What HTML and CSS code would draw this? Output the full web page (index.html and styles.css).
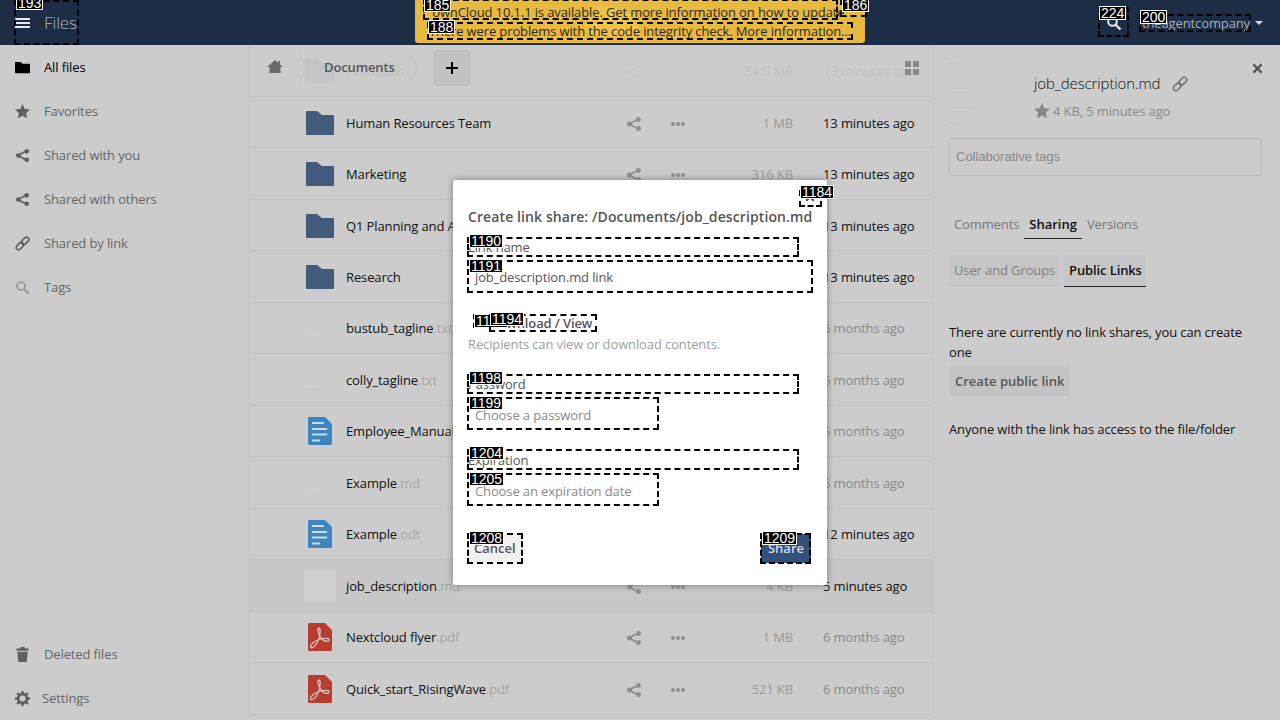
FILE: index.html
```html
<!DOCTYPE html>
<html lang="en">
<head>
  <meta charset="UTF-8">
  <title>Files</title>
  <link rel="stylesheet" href="styles.css">
</head>
<body>
  <svg class="defs" width="0" height="0">
    <symbol id="i-folder" viewBox="0 0 28 24"><path d="M0 1a1 1 0 0 1 1-1h10l5 4h11a1 1 0 0 1 1 1v18a1 1 0 0 1-1 1H1a1 1 0 0 1-1-1z"/></symbol>
    <symbol id="i-doc" viewBox="0 0 24 28">
      <path fill="#3b86c0" d="M0 1a1 1 0 0 1 1-1h16l7 7v20a1 1 0 0 1-1 1H1a1 1 0 0 1-1-1z"/>
      <path stroke="#cfdbe4" stroke-width="2" d="M4 6h12M4 12h15M4 17.500h15M4 23.500h8"/>
    </symbol>
    <symbol id="i-pdf" viewBox="0 0 24 28">
      <path fill="#b93c32" d="M0 1a1 1 0 0 1 1-1h16l7 7v20a1 1 0 0 1-1 1H1a1 1 0 0 1-1-1z"/>
      <path fill="none" stroke="#d8c4c0" stroke-width="1.300" d="M11 5c-2 0-1 6 2 10s8 4 8 2-5-2-10-.5S2 22 2.500 24s4 .5 7-5 3.500-14 1.500-14z"/>
    </symbol>
    <symbol id="i-share" viewBox="0 0 16 16"><path d="M12.500 1a2.500 2.500 0 1 0-.1 5 2.500 2.500 0 0 0 .1-5zM3.500 5.500a2.500 2.500 0 1 0 0 5 2.500 2.500 0 0 0 0-5zM12.500 10a2.500 2.500 0 1 0 0 5 2.500 2.500 0 0 0 0-5z"/><path d="M3 8l9.500-5M3 8l9.500 5" stroke="currentColor" stroke-width="1.800"/></symbol>
    <symbol id="i-dots" viewBox="0 0 14 4"><circle cx="2" cy="2" r="2"/><circle cx="7" cy="2" r="2"/><circle cx="12" cy="2" r="2"/></symbol>
    <symbol id="i-star" viewBox="0 0 16 16"><path d="M8 0l2.400 5.200 5.600.6-4.100 3.800 1.100 5.600L8 12.500l-5 2.700 1.100-5.600L0 5.800l5.600-.6z"/></symbol>
    <symbol id="i-link" viewBox="0 0 16 16"><g fill="none" stroke="currentColor" stroke-width="1.700" transform="rotate(-45 8 8)"><rect x="-0.500" y="5.500" width="9" height="5" rx="2.500"/><rect x="7.500" y="5.500" width="9" height="5" rx="2.500"/></g></symbol>
    <symbol id="i-search" viewBox="0 0 16 16"><circle cx="6.500" cy="6.500" r="4.300" fill="none" stroke="currentColor" stroke-width="2"/><path d="M9.800 9.800l4.700 4.700" stroke="currentColor" stroke-width="2.400"/></symbol>
    <symbol id="i-close" viewBox="0 0 12 12"><path d="M1.500 1.500l9 9M10.500 1.500l-9 9" stroke="currentColor" stroke-width="2.400"/></symbol>
  </svg>

  <header class="topbar">
    <div class="topbar-left">
      <span class="burger"><i></i><i></i><i></i></span>
      <span class="app-name">Files</span>
    </div>
    <div class="notify">
      <svg class="notify-logo" width="70" height="32" viewBox="0 0 70 32"><path d="M14 30a11 11 0 0 1-2-21 16 16 0 0 1 30-1 12 12 0 0 1 10 22z"/></svg>
      <div class="notify-line">ownCloud 10.1.1 is available. Get more information on how to update.</div>
      <div class="notify-line">There were problems with the code integrity check. More information…</div>
    </div>
    <div class="topbar-right">
      <svg class="top-search"><use href="#i-search"/></svg>
      <span class="user">theagentcompany</span>
      <span class="caret"></span>
    </div>
  </header>

  <div class="app">
    <nav class="sidebar">
      <a class="nav-item active">
        <svg class="nav-icon" viewBox="0 0 16 16"><path d="M0 3a1 1 0 0 1 1-1h5l2 2h7a1 1 0 0 1 1 1v8a1 1 0 0 1-1 1H1a1 1 0 0 1-1-1z"/></svg>
        All files
      </a>
      <a class="nav-item"><svg class="nav-icon"><use href="#i-star"/></svg>Favorites</a>
      <a class="nav-item"><svg class="nav-icon"><use href="#i-share"/></svg>Shared with you</a>
      <a class="nav-item"><svg class="nav-icon"><use href="#i-share"/></svg>Shared with others</a>
      <a class="nav-item"><svg class="nav-icon"><use href="#i-link"/></svg>Shared by link</a>
      <a class="nav-item nav-tags"><svg class="nav-icon"><use href="#i-search"/></svg>Tags</a>
      <div class="nav-spacer"></div>
      <a class="nav-item">
        <svg class="nav-icon" viewBox="0 0 16 16"><path d="M6 0h4l1 1.500h3.500V4h-13V1.500H5zM2.500 5h11l-.8 10a1 1 0 0 1-1 1H4.300a1 1 0 0 1-1-1z"/></svg>
        Deleted files
      </a>
      <a class="nav-item nav-settings">
        <svg class="nav-icon" viewBox="0 0 16 16"><circle cx="8" cy="8" r="4.700" fill="none" stroke="currentColor" stroke-width="3"/><path d="M8 0v3M8 13v3M0 8h3M13 8h3M2.300 2.300l2.200 2.200M11.500 11.500l2.200 2.200M13.700 2.300l-2.200 2.200M4.500 11.500l-2.200 2.200" stroke="currentColor" stroke-width="2.600"/></svg>
        Settings
      </a>
    </nav>

    <main class="files">
      <div class="controls">
        <svg class="home" viewBox="0 0 16 16"><path d="M8 1l3 2.700V2h2v3.500L16 8h-2.500v6h-11V8H0z"/></svg>
        <svg class="crumb-sep" viewBox="0 0 10 26"><path d="M1 0l8 13-8 13" fill="none" stroke="#bdbdbd"/></svg>
        <span class="crumb">Documents</span>
        <svg class="crumb-sep" viewBox="0 0 10 26"><path d="M1 0l8 13-8 13" fill="none" stroke="#bdbdbd"/></svg>
        <button class="add-btn"><svg width="14" height="14" viewBox="0 0 14 14"><path d="M7 1v12M1 7h12" stroke="#000" stroke-width="2"/></svg></button>
        <span class="grid-toggle"><i></i><i></i><i></i><i></i></span>
      </div>

      <div class="row under-bar">
        <span class="thumb"><svg class="ico-folder"><use href="#i-folder"/></svg></span>
        <span class="name">Financials</span>
        <svg class="act-share"><use href="#i-share"/></svg>
        <svg class="act-dots"><use href="#i-dots"/></svg>
        <span class="size">34.5 MB</span><span class="date recent">13 minutes ago</span>
      </div>
      <div class="row folder-row">
        <span class="thumb"><svg class="ico-folder"><use href="#i-folder"/></svg></span>
        <span class="name">Human Resources Team</span>
        <svg class="act-share"><use href="#i-share"/></svg>
        <svg class="act-dots"><use href="#i-dots"/></svg>
        <span class="size">1 MB</span><span class="date recent">13 minutes ago</span>
      </div>
      <div class="row">
        <span class="thumb"><svg class="ico-folder"><use href="#i-folder"/></svg></span>
        <span class="name">Marketing</span>
        <svg class="act-share"><use href="#i-share"/></svg>
        <svg class="act-dots"><use href="#i-dots"/></svg>
        <span class="size">316 KB</span><span class="date recent">13 minutes ago</span>
      </div>
      <div class="row folder-row">
        <span class="thumb"><svg class="ico-folder"><use href="#i-folder"/></svg></span>
        <span class="name">Q1 Planning and Allocation</span>
        <svg class="act-share"><use href="#i-share"/></svg>
        <svg class="act-dots"><use href="#i-dots"/></svg>
        <span class="size">160 KB</span><span class="date recent">13 minutes ago</span>
      </div>
      <div class="row">
        <span class="thumb"><svg class="ico-folder"><use href="#i-folder"/></svg></span>
        <span class="name">Research</span>
        <svg class="act-share"><use href="#i-share"/></svg>
        <svg class="act-dots"><use href="#i-dots"/></svg>
        <span class="size">1 MB</span><span class="date recent">13 minutes ago</span>
      </div>
      <div class="row">
        <span class="thumb"><span class="text-thumb"></span></span>
        <span class="name">bustub_tagline<em>.txt</em></span>
        <svg class="act-share"><use href="#i-share"/></svg>
        <svg class="act-dots"><use href="#i-dots"/></svg>
        <span class="size">1 KB</span><span class="date old">6 months ago</span>
      </div>
      <div class="row">
        <span class="thumb"><span class="text-thumb"></span></span>
        <span class="name">colly_tagline<em>.txt</em></span>
        <svg class="act-share"><use href="#i-share"/></svg>
        <svg class="act-dots"><use href="#i-dots"/></svg>
        <span class="size">1 KB</span><span class="date old">6 months ago</span>
      </div>
      <div class="row">
        <span class="thumb"><svg class="ico-doc"><use href="#i-doc"/></svg></span>
        <span class="name">Employee_Manual<em>.odt</em></span>
        <svg class="act-share"><use href="#i-share"/></svg>
        <svg class="act-dots"><use href="#i-dots"/></svg>
        <span class="size">9 KB</span><span class="date old">6 months ago</span>
      </div>
      <div class="row">
        <span class="thumb"><span class="text-thumb"></span></span>
        <span class="name">Example<em>.md</em></span>
        <svg class="act-share"><use href="#i-share"/></svg>
        <svg class="act-dots"><use href="#i-dots"/></svg>
        <span class="size">1 KB</span><span class="date old">6 months ago</span>
      </div>
      <div class="row">
        <span class="thumb"><svg class="ico-doc"><use href="#i-doc"/></svg></span>
        <span class="name">Example<em>.odt</em></span>
        <svg class="act-share"><use href="#i-share"/></svg>
        <svg class="act-dots"><use href="#i-dots"/></svg>
        <span class="size">37 KB</span><span class="date recent">12 minutes ago</span>
      </div>
      <div class="row selected">
        <span class="thumb"><span class="text-thumb filled"></span></span>
        <span class="name">job_description<em>.md</em></span>
        <svg class="act-share"><use href="#i-share"/></svg>
        <svg class="act-dots"><use href="#i-dots"/></svg>
        <span class="size">4 KB</span><span class="date recent">5 minutes ago</span>
      </div>
      <div class="row">
        <span class="thumb"><svg class="ico-doc"><use href="#i-pdf"/></svg></span>
        <span class="name">Nextcloud flyer<em>.pdf</em></span>
        <svg class="act-share"><use href="#i-share"/></svg>
        <svg class="act-dots"><use href="#i-dots"/></svg>
        <span class="size">1 MB</span><span class="date old">6 months ago</span>
      </div>
      <div class="row">
        <span class="thumb"><svg class="ico-doc"><use href="#i-pdf"/></svg></span>
        <span class="name">Quick_start_RisingWave<em>.pdf</em></span>
        <svg class="act-share"><use href="#i-share"/></svg>
        <svg class="act-dots"><use href="#i-dots"/></svg>
        <span class="size">521 KB</span><span class="date old">6 months ago</span>
      </div>
    </main>

    <aside class="details">
      <div class="file-head">
        <div class="preview"><i></i><i></i><i></i><i></i></div>
        <div class="file-info">
          <div class="file-title">job_description.md <svg class="title-link"><use href="#i-link"/></svg></div>
          <div class="file-meta"><svg class="meta-star"><use href="#i-star"/></svg>4 KB, 5 minutes ago</div>
        </div>
        <svg class="details-close"><use href="#i-close"/></svg>
      </div>
      <div class="tags-input">Collaborative tags</div>
      <div class="tabs">
        <span class="tab">Comments</span>
        <span class="tab tab-on">Sharing</span>
        <span class="tab">Versions</span>
      </div>
      <div class="subtabs">
        <span class="subtab">User and Groups</span>
        <span class="subtab subtab-on">Public Links</span>
      </div>
      <p class="share-note">There are currently no link shares, you can create one</p>
      <button class="create-link">Create public link</button>
      <p class="share-hint">Anyone with the link has access to the file/folder</p>
    </aside>
  </div>

  <div class="modal">
    <svg class="modal-close"><use href="#i-close"/></svg>
    <h3 class="modal-title">Create link share: /Documents/job_description.md</h3>
    <label class="field-label first">Link name</label>
    <div class="input input-wide input-filled">job_description.md link</div>
    <div class="perm"><b>Download / View</b></div>
    <div class="perm-hint">Recipients can view or download contents.</div>
    <label class="field-label">Password</label>
    <div class="input">Choose a password</div>
    <label class="field-label">Expiration</label>
    <div class="input">Choose an expiration date</div>
    <div class="modal-actions">
      <button class="btn-cancel">Cancel</button>
      <button class="btn-share">Share</button>
    </div>
  </div>

  <div class="marks">
    <div class="mark m193"><span>193</span></div>
    <div class="mark m185"><span>185</span></div>
    <div class="mark m186"><span>186</span></div>
    <div class="mark m188"><span>188</span></div>
    <div class="mark m224"><span>224</span></div>
    <div class="mark m200"><span>200</span></div>
    <div class="mark m1184"><span>1184</span></div>
    <div class="mark m1190"><span>1190</span></div>
    <div class="mark m1191"><span>1191</span></div>
    <div class="mark m1193"><span>1193</span></div>
    <div class="mark m1194"><span>1194</span></div>
    <div class="mark m1198"><span>1198</span></div>
    <div class="mark m1199"><span>1199</span></div>
    <div class="mark m1204"><span>1204</span></div>
    <div class="mark m1205"><span>1205</span></div>
    <div class="mark m1208"><span>1208</span></div>
    <div class="mark m1209"><span>1209</span></div>
  </div>
</body>
</html>
```

FILE: styles.css
```css
* {
  box-sizing: border-box;
}
html, body {
  margin: 0;
  height: 720px;
  overflow: hidden;
}
body {
  position: relative;
  width: 1280px;
  font-family: 'Open Sans', sans-serif;
  font-size: 13px;
  letter-spacing: -0.12px;
  color: #222;
  background: #ccc;
}
.defs {
  position: absolute;
}

/* top bar */
.topbar {
  height: 45px;
  background: #1c2d45;
  display: flex;
  justify-content: space-between;
  align-items: flex-start;
  color: #a6adb8;
}
.topbar-left {
  width: 415px;
  height: 45px;
  display: flex;
  align-items: center;
  padding-left: 15px;
}
.burger {
  width: 15px;
  display: flex;
  flex-direction: column;
  gap: 2px;
  margin-right: 14px;
}
.burger i {
  height: 2px;
  background: #e8eaee;
}
.app-name {
  font-size: 17px;
  font-weight: 300;
  color: #b0b6c0;
}
.notify {
  position: relative;
  width: 450px;
  height: 43px;
  background: #e8b93f;
  border-radius: 0 0 3px 3px;
  color: #2b2a20;
  text-align: center;
  line-height: 19px;
  padding-top: 3px;
  overflow: hidden;
}
.notify-logo {
  position: absolute;
  left: 165px;
  top: 6px;
  fill: #efc348;
}
.notify-line {
  position: relative;
}
.topbar-right {
  width: 415px;
  height: 45px;
  display: flex;
  align-items: center;
  justify-content: flex-end;
  padding-right: 17px;
}
.top-search {
  width: 16px;
  height: 16px;
  color: #e4e6ea;
  margin-right: 20px;
}
.user {
  color: #a6adb8;
  margin-right: 5px;
}
.caret {
  border: 4px solid transparent;
  border-top: 4px solid #d6d9de;
  border-bottom: 0;
}

/* layout */
.app {
  display: flex;
  height: 675px;
}
.sidebar {
  width: 250px;
  border-right: 1px solid #c2c2c2;
  display: flex;
  flex-direction: column;
  flex: none;
}
.nav-item {
  height: 44px;
  flex: none;
  display: flex;
  align-items: center;
  color: #666;
  padding-left: 15px;
}
.nav-item.active {
  color: #000;
}
.nav-icon {
  width: 15px;
  height: 15px;
  margin-right: 14px;
  fill: currentColor;
  color: #5f5f5f;
}
.active .nav-icon {
  color: #000;
}
.nav-tags .nav-icon {
  color: #999;
}
.nav-settings .nav-icon {
  width: 15px;
  margin-right: 12px;
}
.nav-spacer {
  flex: 1;
}

/* file list */
.files {
  position: relative;
  width: 684px;
  flex: none;
  border-right: 1px solid #c2c2c2;
}
.controls {
  position: absolute;
  left: 0;
  top: 0;
  width: 100%;
  height: 50px;
  background: rgba(204, 204, 204, 0.94);
  display: flex;
  align-items: flex-start;
  padding: 0 14px 0 17px;
}
.home {
  width: 16px;
  height: 16px;
  margin-top: 14px;
  fill: #6a6a6a;
}
.crumb-sep {
  width: 10px;
  height: 26px;
  margin: 10px 0 0 16px;
}
.crumb {
  font-weight: 600;
  color: #555;
  margin: 13px 0 0 15px;
  line-height: 18px;
}
.crumb + .crumb-sep {
  margin-left: 14px;
}
.add-btn {
  width: 38px;
  height: 36px;
  margin: 5px 0 0 14px;
  padding: 0;
  border: 0;
  border-radius: 3px;
  background: #c1c1c1;
  display: flex;
  align-items: center;
  justify-content: center;
}
.grid-toggle {
  margin: 16px 0 0 auto;
  display: grid;
  grid-template-columns: 6px 6px;
  grid-auto-rows: 6px;
  gap: 2px;
}
.grid-toggle i {
  background: #8a8a8a;
}
.row {
  height: 51.5px;
  padding-top: 1px;
  border-bottom: 1px solid #c3c3c3;
  display: flex;
  align-items: center;
}
.row.folder-row {
  padding-top: 2px;
}
.row.selected {
  background: #c7c7c7;
}
.thumb {
  width: 96px;
  flex: none;
  display: flex;
  padding-left: 56px;
}
.ico-folder {
  width: 28px;
  height: 24px;
  fill: #415b7d;
}
.ico-doc {
  width: 24px;
  height: 28px;
  margin-left: 2px;
}
.text-thumb {
  width: 32px;
  height: 32px;
  margin-left: -2px;
  background: linear-gradient(#d2d2d2, #d2d2d2) 0 22px / 14px 1px no-repeat;
}
.text-thumb.filled {
  background: #cfcfcf;
}
.name {
  width: 272px;
  flex: none;
  color: #111;
  white-space: nowrap;
}
.name em {
  font-style: normal;
  color: #a5a5a5;
}
.act-share {
  width: 16px;
  height: 16px;
  margin: 2px 0 0 8px;
  flex: none;
  color: #8e8e8e;
  fill: #8e8e8e;
}
.act-dots {
  width: 14px;
  height: 4px;
  margin: 2px 0 0 29px;
  flex: none;
  fill: #8e8e8e;
}
.size {
  width: 108px;
  flex: none;
  text-align: right;
  color: #999;
}
.date {
  margin-left: 30px;
  white-space: nowrap;
}
.date.recent {
  color: #111;
}
.date.old {
  color: #888;
}
.under-bar .name,
.under-bar .size,
.under-bar .date {
  color: #000;
}

/* right panel */
.details {
  flex: 1;
  padding: 0 18px 0 15px;
  position: relative;
}
.file-head {
  display: flex;
  height: 93px;
}
.preview {
  width: 75px;
  height: 75px;
  margin-top: 18px;
  display: flex;
  flex-direction: column;
  gap: 14px;
}
.preview i {
  height: 1px;
  width: 20px;
  background: #c4c4c4;
}
.preview i:first-child {
  width: 8px;
  margin-bottom: 14px;
}
.preview i:nth-child(3) {
  width: 24px;
}
.preview i:last-child {
  width: 10px;
}
.file-info {
  margin-left: 10px;
  padding-top: 28px;
}
.file-title {
  font-size: 15px;
  font-weight: 300;
  color: #111;
  line-height: 20px;
  display: flex;
  align-items: center;
  gap: 7px;
}
.title-link {
  width: 16px;
  height: 16px;
  color: #777;
  margin: 1px 0 0 5px;
}
.file-meta {
  margin-top: 8px;
  display: flex;
  align-items: center;
  color: #8a8a8a;
  line-height: 20px;
}
.meta-star {
  width: 16px;
  height: 16px;
  fill: #888;
  margin-right: 3px;
}
.details-close {
  position: absolute;
  right: 17px;
  top: 18px;
  width: 11px;
  height: 11px;
  color: #555;
}
.tags-input {
  height: 38px;
  border: 1px solid #b9b9b9;
  border-radius: 3px;
  font-family: 'Liberation Sans', sans-serif;
  letter-spacing: 0;
  color: #888;
  line-height: 36px;
  padding-left: 6px;
}
.tabs {
  margin-top: 35px;
  display: flex;
  height: 28px;
}
.tab {
  padding: 0 5px;
  line-height: 26px;
  height: 28px;
  color: #777;
}
.tab-on {
  color: #111;
  font-weight: 600;
  letter-spacing: 0;
  border-bottom: 1px solid #222;
}
.subtabs {
  margin-top: 16px;
  display: flex;
  gap: 5px;
  height: 32px;
}
.subtab {
  padding: 0 4px 0 5px;
  line-height: 30px;
  background: #c6c6c6;
  color: #808080;
}
.subtab-on {
  color: #111;
  font-weight: 600;
  border-bottom: 1px solid #222;
}
.share-note {
  margin: 35px 0 0;
  line-height: 20px;
  color: #111;
}
.create-link {
  display: block;
  margin-top: 4px;
  height: 30px;
  padding: 0 6px;
  border: 0;
  border-radius: 3px;
  background: #c4c4c4;
  font: 600 13px 'Open Sans', sans-serif;
  letter-spacing: 0;
  color: #555;
}
.share-hint {
  margin: 23px 0 0;
  line-height: 20px;
  color: #111;
}

/* dialog */
.modal {
  position: absolute;
  left: 453px;
  top: 180px;
  width: 374px;
  height: 405px;
  background: #fff;
  box-shadow: 0 0 7px #777;
  border-radius: 2px;
  padding: 28px 15px 0;
  color: #555;
}
.modal-close {
  position: absolute;
  left: 352px;
  top: 12px;
  width: 10px;
  height: 10px;
  color: #444;
}
.modal-title {
  margin: 0;
  font-size: 14px;
  font-weight: 600;
  line-height: 18px;
  letter-spacing: 0.1px;
  color: #555;
  white-space: nowrap;
}
.field-label {
  display: block;
  line-height: 18px;
  margin-top: 22px;
}
.field-label.first {
  margin-top: 12px;
}
.input {
  width: 190px;
  height: 32px;
  margin-top: 4px;
  border: 1px solid #eee;
  border-radius: 2px;
  padding-left: 6px;
  line-height: 34px;
  color: #8a8a8a;
}
.input-wide {
  width: 344px;
  height: 30px;
  margin-top: 5px;
  line-height: 30px;
}
.input-filled {
  color: #555;
}
.perm {
  margin: 23px 0 0 21px;
  line-height: 18px;
}
.perm b {
  font-weight: 600;
}
.perm-hint {
  margin-top: 3px;
  line-height: 18px;
  color: #a0a0a0;
}
.modal-actions {
  margin-top: 29px;
  display: flex;
  justify-content: space-between;
  padding-right: 1px;
}
.modal-actions button {
  height: 29px;
  padding: 0 6px 1px;
  border: 0;
  border-radius: 3px;
  font: 600 13px 'Open Sans', sans-serif;
  letter-spacing: 0;
}
.btn-cancel {
  background: #f0f0f0;
  color: #555;
}
.modal-actions .btn-share {
  padding: 0 7px 1px;
  background: #32507a;
  color: #d6dce4;
}

/* numbered dashed boxes over the page */
.marks {
  position: absolute;
  left: 0;
  top: 0;
  width: 1280px;
  height: 720px;
  letter-spacing: 0;
}
.mark {
  position: absolute;
  border: 2px dashed #000;
}
.mark span {
  position: absolute;
  left: 0;
  top: -5px;
  background: #000;
  color: #fff;
  border: 1px solid #fff;
  padding: 0 1px;
  font: 14px/12px 'Liberation Sans', sans-serif;
  white-space: nowrap;
}
.m193 { left: 14px; top: 0; width: 65px; height: 45px; }
.m193 span { top: -6px; }
.m185 { left: 423px; top: -1px; width: 415px; height: 21px; }
.m185 span { top: -3px; left: -1px; }
.m186 { left: 840px; top: -1px; width: 27px; height: 18px; }
.m186 span { top: -3px; }
.m188 { left: 427px; top: 22px; width: 426px; height: 18px; }
.m188 span { top: -4px; left: -1px; }
.m224 { left: 1098px; top: 7px; width: 31px; height: 30px; }
.m224 span { top: -3px; left: -1px; }
.m200 { left: 1139px; top: 14px; width: 112px; height: 18px; }
.m200 span { top: -6px; left: -1px; }
.m1184 { left: 799px; top: 190px; width: 23px; height: 17px; }
.m1184 span { top: -7px; left: -1px; }
.m1190 { left: 467px; top: 237px; width: 332px; height: 20px; }
.m1191 { left: 467px; top: 260px; width: 346px; height: 33px; }
.m1191 span { top: -3px; }
.m1193 { left: 473px; top: 314px; width: 17px; height: 14px; }
.m1193 span { top: -2px; left: -1px; }
.m1194 { left: 489px; top: 314px; width: 108px; height: 18px; }
.m1194 span { top: -4px; left: -1px; }
.m1198 { left: 467px; top: 374px; width: 332px; height: 20px; }
.m1199 { left: 467px; top: 397px; width: 192px; height: 33px; }
.m1199 span { top: -3px; }
.m1204 { left: 467px; top: 449px; width: 332px; height: 21px; }
.m1205 { left: 467px; top: 473px; width: 192px; height: 33px; }
.m1205 span { top: -3px; }
.m1208 { left: 467px; top: 533px; width: 56px; height: 31px; }
.m1208 span { top: -4px; }
.m1209 { left: 760px; top: 533px; width: 51px; height: 31px; }
.m1209 span { top: -4px; }
```
